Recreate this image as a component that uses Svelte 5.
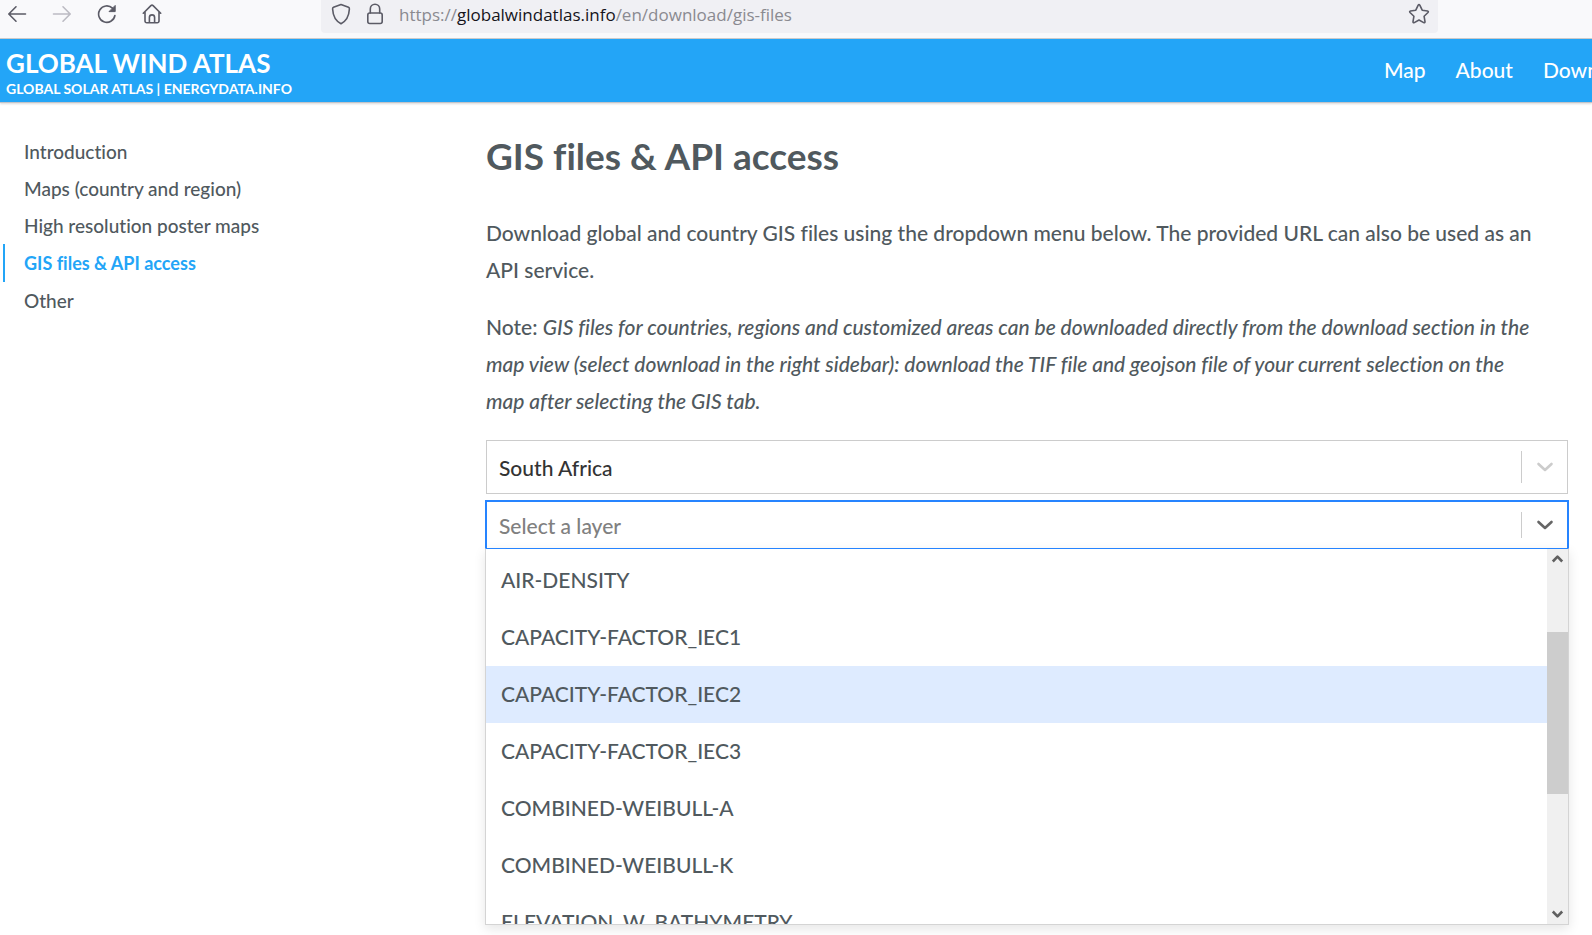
<script>
  const sections = [
    'Introduction',
    'Maps (country and region)',
    'High resolution poster maps',
    'GIS files & API access',
    'Other'
  ];
  const activeSection = 'GIS files & API access';
  const layers = [
    'AIR-DENSITY',
    'CAPACITY-FACTOR_IEC1',
    'CAPACITY-FACTOR_IEC2',
    'CAPACITY-FACTOR_IEC3',
    'COMBINED-WEIBULL-A',
    'COMBINED-WEIBULL-K',
    'ELEVATION_W_BATHYMETRY'
  ];
  let focused = $state('CAPACITY-FACTOR_IEC2');
</script>

<div class="window">
  <div class="toolbar">
    <div class="tools">
      <button aria-label="Back">
        <svg width="20" height="20" viewBox="0 0 20 20"><path d="M18.5 10H2M9 2.8 1.8 10 9 17.2" /></svg>
      </button>
      <button aria-label="Forward" disabled>
        <svg width="20" height="20" viewBox="0 0 20 20"><path d="M1.5 10H18M11 2.8 18.2 10 11 17.2" /></svg>
      </button>
      <button aria-label="Reload">
        <svg width="20" height="20" viewBox="0 0 20 20"><path d="M17.9 11.5A8.2 8.2 0 1 1 15.5 4.2" /><path class="solid" d="M18.2 1.8v5.8h-5.8z" /></svg>
      </button>
      <button aria-label="Home">
        <svg width="20" height="20" viewBox="0 0 20 20"><path d="M1.3 9.2 8.9 1.6a1.6 1.6 0 0 1 2.2 0l7.6 7.6M3 8v9a1.7 1.7 0 0 0 1.7 1.7h10.6A1.7 1.7 0 0 0 17 17V8M7.4 18.5v-5a2.6 2.6 0 0 1 5.2 0v5" /></svg>
      </button>
    </div>
    <div class="address">
      <svg width="20" height="22" viewBox="0 0 20 22"><path d="M10 1.5 17.5 4.3Q18.5 4.8 18.4 6C18 13 15.5 18 10 20.7 4.5 18 2 13 1.6 6Q1.5 4.8 2.5 4.3Z" /></svg>
      <svg width="20" height="22" viewBox="0 0 20 22"><rect x="2.8" y="10" width="14.4" height="10.5" rx="2" /><path d="M5.3 10V6a4.7 4.7 0 0 1 9.4 0v4" /></svg>
      <span class="url">https://<b>globalwindatlas.info</b>/en/download/gis-files</span>
      <button aria-label="Bookmark this page">
        <svg width="22" height="22" viewBox="0 0 22 22"><path d="M10.2 2.2q.8-1.3 1.6 0l2.4 5 5.3.8q1.4.4.5 1.5l-3.9 3.8.9 5.4q0 1.5-1.3.9L11 17l-4.7 2.6q-1.3.6-1.3-.9l.9-5.4L2 9.5q-.9-1.1.5-1.5l5.3-.8z" /></svg>
      </button>
    </div>
  </div>

  <header>
    <div class="brand">
      <a class="name" href="#home">GLOBAL WIND ATLAS</a>
      <div class="partners"><a href="#solar">GLOBAL SOLAR ATLAS</a> | <a href="#energydata">ENERGYDATA.INFO</a></div>
    </div>
    <nav class="menu-links">
      <a href="#map">Map</a>
      <a href="#about">About</a>
      <a href="#download">Download</a>
    </nav>
  </header>

  <div class="page">
    <nav class="sections">
      {#each sections as section}
        <a href="#section" class:active={section === activeSection}>{section}</a>
      {/each}
    </nav>

    <main>
      <h1>GIS files &amp; API access</h1>
      <p>Download global and country GIS files using the dropdown menu below. The provided URL can also be used as an API service.</p>
      <p>Note: <em>GIS files for countries, regions and customized areas can be downloaded directly from the download section in the map view (select download in the right sidebar): download the TIF file and geojson file of your current selection on the map after selecting the GIS tab.</em></p>

      <div class="field">
        <select aria-label="Country"><option>South Africa</option></select>
        <span class="indicator"><svg width="24" height="24" viewBox="0 0 24 24"><path d="m5.5 9 6.5 6 6.5-6" /></svg></span>
      </div>
      <div class="field open">
        <input type="text" role="combobox" aria-label="Layer" aria-expanded="true" aria-controls="layers" placeholder="Select a layer" />
        <span class="indicator"><svg width="24" height="24" viewBox="0 0 24 24"><path d="m5.5 9 6.5 6 6.5-6" /></svg></span>
        <div class="dropdown">
          <ul id="layers" role="listbox" aria-label="Layers">
            {#each layers as layer}
              <li role="option" aria-selected={layer === focused} class:focused={layer === focused} onmouseenter={() => (focused = layer)}>{layer}</li>
            {/each}
          </ul>
          <div class="scrollbar">
            <svg width="21" height="20" viewBox="0 0 21 20"><path d="m5.8 12.5 4.7-4.8 4.7 4.8" /></svg>
            <div class="track"><div class="thumb"></div></div>
            <svg width="21" height="20" viewBox="0 0 21 20"><path d="m5.8 7.5 4.7 4.8 4.7-4.8" /></svg>
          </div>
        </div>
      </div>
    </main>
  </div>
</div>

<style>
  :global(body) {
    background: #fff;
    color: #50595e;
    font-family: "Lato Medium", Lato, "Open Sans", sans-serif;
    font-size: 21px;
    font-weight: 500;
    font-variant-ligatures: none;
  }
  .window {
    min-height: 100vh;
    overflow-x: clip;
  }
  a {
    color: inherit;
    text-decoration: none;
  }
  svg {
    display: block;
    fill: none;
    stroke: currentColor;
    stroke-width: 1.6;
    stroke-linecap: round;
    stroke-linejoin: round;
  }
  button {
    padding: 0;
    border: 0;
    background: none;
    color: inherit;
  }
  button:disabled {
    color: #bcbbc3;
  }
  .solid {
    fill: currentColor;
    stroke-width: 1;
  }
  .toolbar {
    display: flex;
    height: 38px;
    border-bottom: 1px solid #ccc;
    background: #f9f9fb;
    color: #5b5b66;
  }
  .tools {
    display: flex;
    flex: 0 0 314px;
    gap: 25px;
    height: 28px;
    align-items: center;
    padding-left: 7px;
  }
  .address {
    display: flex;
    flex: 1;
    gap: 14px;
    height: 27px;
    align-items: center;
    margin-right: 154px;
    padding: 0 8px 6px 10px;
    border-radius: 0 0 4px 4px;
    background: #f0f0f4;
  }
  .url {
    flex: 1;
    padding-top: 2px;
    color: #8a8a90;
    font: 17px/24px "Open Sans", sans-serif;
  }
  .url b {
    color: #15141a;
    font-weight: 400;
  }
  header {
    display: flex;
    height: 63px;
    justify-content: space-between;
    border-bottom: 1px solid #c4c4c8;
    box-shadow: 0 1px 2px rgba(0, 0, 0, 0.15);
    background: #23a5f7;
    color: #fff;
  }
  .brand {
    padding: 8px 6px;
    font-family: Lato, "Open Sans", sans-serif;
    font-weight: 700;
    white-space: nowrap;
  }
  .name {
    display: block;
    font-size: 26px;
    line-height: 32px;
  }
  .partners {
    font-size: 14px;
    line-height: 20px;
  }
  .menu-links {
    display: flex;
    flex: 0 0 208px;
    gap: 30px;
    min-width: 0;
    line-height: 61px;
  }
  .page {
    display: grid;
    grid-template-columns: 462px minmax(0, 1fr);
    gap: 24px;
    padding-right: 24px;
  }
  .sections {
    display: flex;
    flex-direction: column;
    padding: 30px 3px;
    font-size: 19px;
    line-height: 37px;
  }
  .sections a {
    padding-left: 19px;
    border-left: 2px solid transparent;
  }
  .sections .active {
    border-color: #23a5f7;
    color: #23a5f7;
    font-family: Lato, "Open Sans", sans-serif;
    font-size: 18px;
    line-height: 38px;
    font-weight: 700;
  }
  h1 {
    margin: 29px 0 34px;
    font-family: Lato, "Open Sans", sans-serif;
    font-size: 37px;
    line-height: 48px;
  }
  p {
    margin: 0 0 20px;
    padding-right: 24px;
    line-height: 37px;
  }
  .field {
    position: relative;
    display: flex;
    height: 52px;
    margin-top: 21px;
    border: 1px solid #ccc;
    color: #ccc;
  }
  select,
  input {
    flex: 1;
    min-width: 0;
    padding: 0 12px;
    border: 0;
    outline: 0;
    appearance: none;
    background: none;
    color: #333;
    font: inherit;
  }
  input::placeholder {
    color: #808080;
    opacity: 1;
  }
  .indicator {
    display: flex;
    width: 45px;
    margin: 10px 0;
    align-items: center;
    justify-content: center;
    border-left: 1px solid #ccc;
  }
  .indicator svg {
    stroke-width: 2.6;
  }
  .open {
    height: 46px;
    margin-top: 7px;
    border-color: #2684ff;
    box-shadow: 0 0 0 1px #2684ff;
    color: #666;
  }
  .dropdown {
    position: absolute;
    top: 46px;
    right: -2px;
    left: -2px;
    display: flex;
    height: 375px;
    border: 1px solid #d4d4d4;
    border-top-color: #2684ff;
    box-shadow: 0 4px 11px rgba(0, 0, 0, 0.1);
    background: #fff;
    color: #50595e;
  }
  ul {
    flex: 1;
    margin: 0;
    padding: 3px 0 0;
    overflow: hidden;
    list-style: none;
  }
  li {
    padding: 0 15px 2px;
    line-height: 55px;
  }
  .focused {
    background: #deebff;
  }
  .scrollbar {
    display: flex;
    flex-direction: column;
    width: 21px;
    background: #f0f0f0;
    color: #606060;
  }
  .scrollbar svg {
    stroke-width: 2.6;
    stroke-linecap: butt;
  }
  .track {
    flex: 1;
    padding-top: 63px;
  }
  .thumb {
    height: 162px;
    background: #cdcdcd;
  }
</style>
